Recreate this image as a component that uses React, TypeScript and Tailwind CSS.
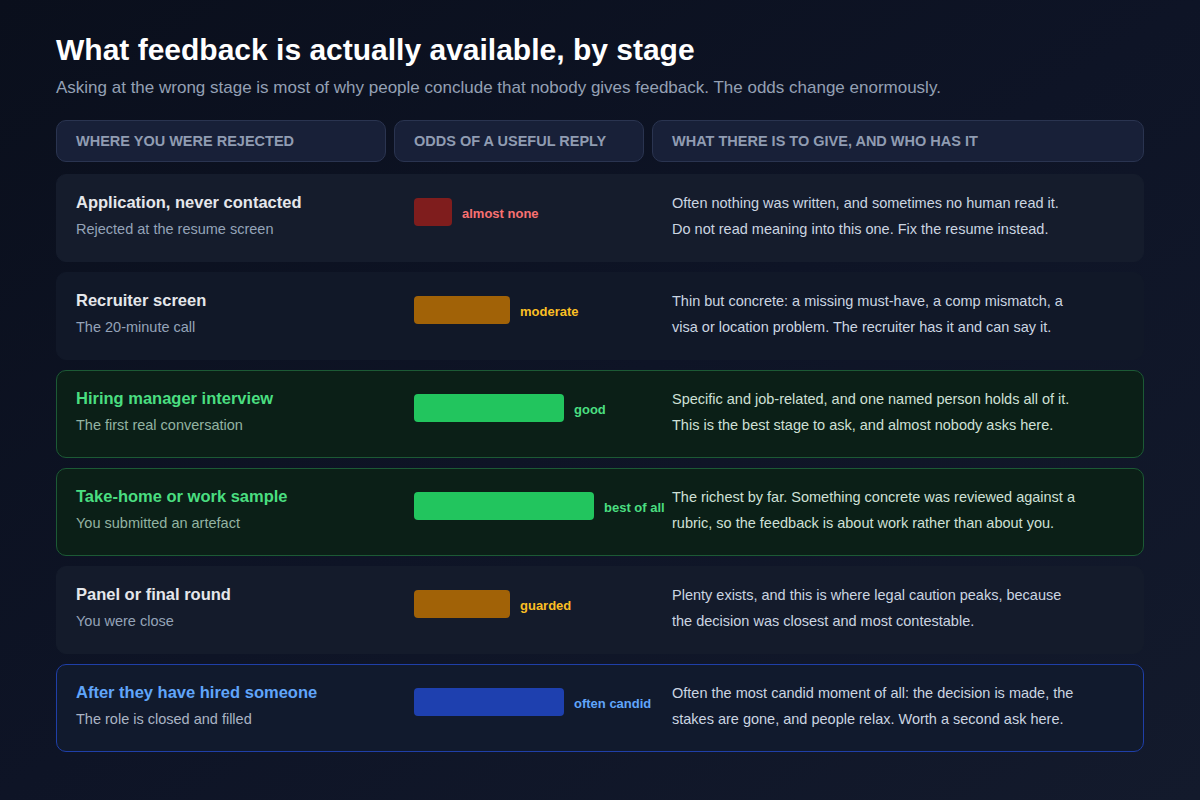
import React from "react";

type Row = {
  title: string;
  sub: string;
  bar: number;
  barColor: string;
  label: string;
  labelColor: string;
  lines: string[];
  box: string;
  titleColor: string;
  subColor: string;
  descColor: string;
};

const neutralBox = "bg-[#141b2b] border-[#141b2b]";
const rows: Row[] = [
  {
    title: "Application, never contacted",
    sub: "Rejected at the resume screen",
    bar: 38,
    barColor: "bg-[#7f1d1d]",
    label: "almost none",
    labelColor: "text-[#f87171]",
    lines: [
      "Often nothing was written, and sometimes no human read it.",
      "Do not read meaning into this one. Fix the resume instead.",
    ],
    box: "bg-[#151c2c] border-[#151c2c]",
    titleColor: "text-[#e5e7eb]",
    subColor: "text-[#94a3b8]",
    descColor: "text-[#cbd5e1]",
  },
  {
    title: "Recruiter screen",
    sub: "The 20-minute call",
    bar: 96,
    barColor: "bg-[#a16207]",
    label: "moderate",
    labelColor: "text-[#fbbf24]",
    lines: [
      "Thin but concrete: a missing must-have, a comp mismatch, a",
      "visa or location problem. The recruiter has it and can say it.",
    ],
    box: "bg-[#111828] border-[#111828]",
    titleColor: "text-[#e5e7eb]",
    subColor: "text-[#94a3b8]",
    descColor: "text-[#cbd5e1]",
  },
  {
    title: "Hiring manager interview",
    sub: "The first real conversation",
    bar: 150,
    barColor: "bg-[#22c55e]",
    label: "good",
    labelColor: "text-[#4ade80]",
    lines: [
      "Specific and job-related, and one named person holds all of it.",
      "This is the best stage to ask, and almost nobody asks here.",
    ],
    box: "bg-[#0b1f17] border-[#1c5a35]",
    titleColor: "text-[#4ade80]",
    subColor: "text-[#93b3a2]",
    descColor: "text-[#cfe0d6]",
  },
  {
    title: "Take-home or work sample",
    sub: "You submitted an artefact",
    bar: 180,
    barColor: "bg-[#22c55e]",
    label: "best of all",
    labelColor: "text-[#4ade80]",
    lines: [
      "The richest by far. Something concrete was reviewed against a",
      "rubric, so the feedback is about work rather than about you.",
    ],
    box: "bg-[#0b1f17] border-[#1c5a35]",
    titleColor: "text-[#4ade80]",
    subColor: "text-[#93b3a2]",
    descColor: "text-[#cfe0d6]",
  },
  {
    title: "Panel or final round",
    sub: "You were close",
    bar: 96,
    barColor: "bg-[#a16207]",
    label: "guarded",
    labelColor: "text-[#fbbf24]",
    lines: [
      "Plenty exists, and this is where legal caution peaks, because",
      "the decision was closest and most contestable.",
    ],
    box: neutralBox,
    titleColor: "text-[#e5e7eb]",
    subColor: "text-[#94a3b8]",
    descColor: "text-[#cbd5e1]",
  },
  {
    title: "After they have hired someone",
    sub: "The role is closed and filled",
    bar: 150,
    barColor: "bg-[#1e40af]",
    label: "often candid",
    labelColor: "text-[#60a5fa]",
    lines: [
      "Often the most candid moment of all: the decision is made, the",
      "stakes are gone, and people relax. Worth a second ask here.",
    ],
    box: "bg-[#111a2d] border-[#1f3fa8]",
    titleColor: "text-[#60a5fa]",
    subColor: "text-[#aab4c4]",
    descColor: "text-[#cbd5e1]",
  },
];

const headers = [
  "WHERE YOU WERE REJECTED",
  "ODDS OF A USEFUL REPLY",
  "WHAT THERE IS TO GIVE, AND WHO HAS IT",
];

export default function App() {
  return (
    <div
      className="w-full min-h-[800px] bg-gradient-to-br from-[#0a0f1c] via-[#0e1426] to-[#131a2c] px-14 pt-8 pb-10"
      style={{ fontFamily: '"Liberation Sans", Arial, sans-serif' }}
    >
      <h1 className="text-[30px] leading-[36px] font-bold text-white">
        What feedback is actually available, by stage
      </h1>
      <p className="mt-2 text-[17px] leading-6 text-[#94a0b4]">
        Asking at the wrong stage is most of why people conclude that nobody gives feedback. The odds change enormously.
      </p>

      <div className="mt-5 grid grid-cols-[330px_250px_1fr] gap-2">
        {headers.map((h) => (
          <div
            key={h}
            className="h-[42px] flex items-center pl-[19px] pr-5 pt-[2px] rounded-[10px] border border-[#2a3450] bg-[#182038] text-[14.5px] font-bold text-[#909cb2]"
          >
            {h}
          </div>
        ))}
      </div>

      <div className="mt-3 flex flex-col gap-[10px]">
        {rows.map((r) => (
          <div
            key={r.title}
            className={`h-[88px] rounded-[10px] border grid grid-cols-[329px_250px_1fr] gap-2 pt-[17px] ${r.box}`}
          >
            <div className="pl-[19px]">
              <div className={`text-[16.5px] leading-5 font-bold ${r.titleColor}`}>{r.title}</div>
              <div className={`mt-[7px] text-[14.5px] leading-5 ${r.subColor}`}>{r.sub}</div>
            </div>
            <div className="pl-5 pt-[6px] min-w-0">
              <div className="flex items-center h-7">
                <div className={`h-7 shrink-0 rounded-[4px] ${r.barColor}`} style={{ width: r.bar }} />
                <span className={`ml-[10px] pt-[3px] shrink-0 text-[13px] font-bold whitespace-nowrap ${r.labelColor}`}>
                  {r.label}
                </span>
              </div>
            </div>
            <div className={`pl-5 -mt-[2px] text-[14.5px] leading-[26px] ${r.descColor}`}>
              {r.lines.map((l) => (
                <div key={l} className="whitespace-nowrap">
                  {l}
                </div>
              ))}
            </div>
          </div>
        ))}
      </div>
    </div>
  );
}
